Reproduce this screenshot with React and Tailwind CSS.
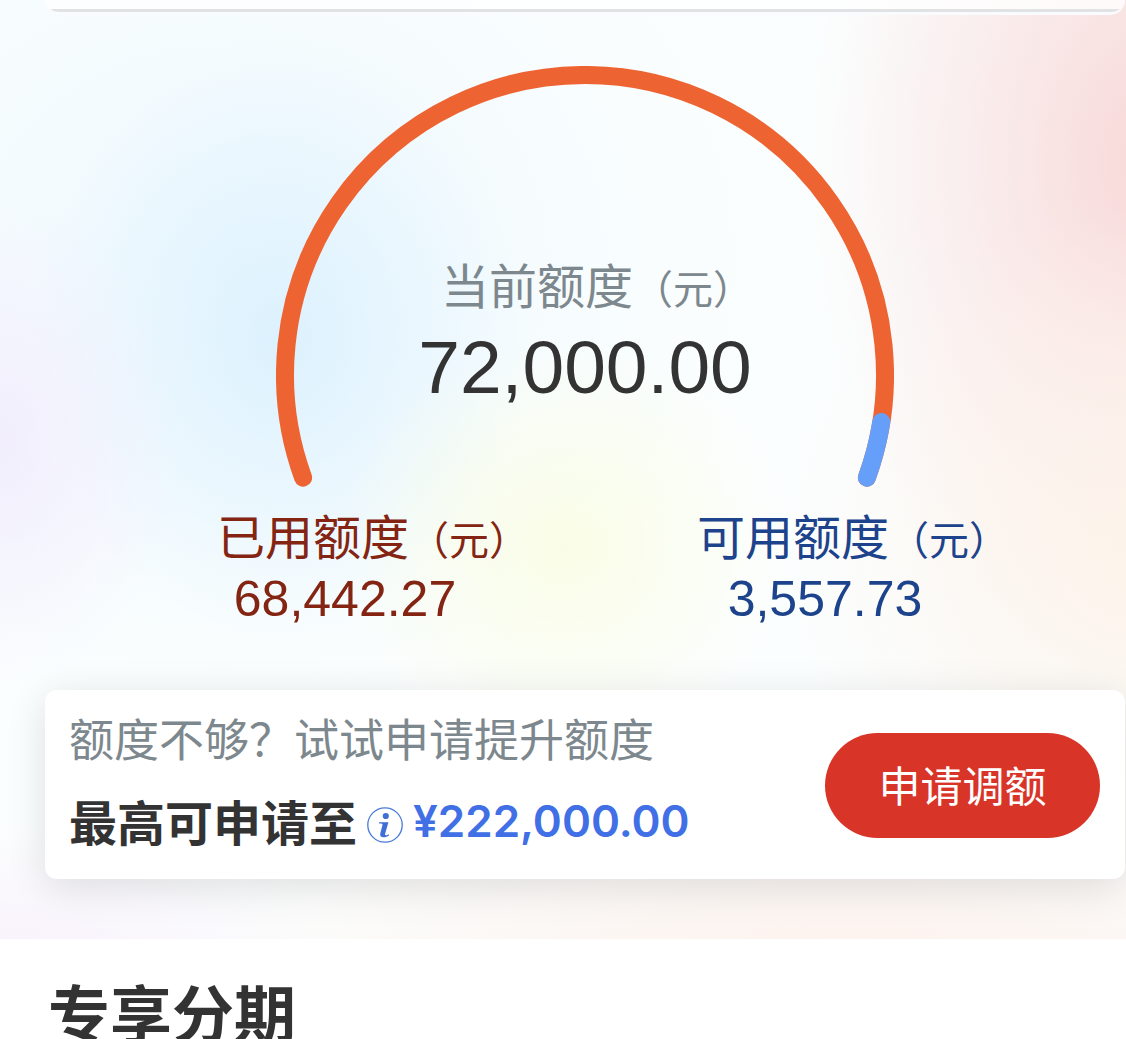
import React from 'react';

const limit = {
  total: '72,000.00',
  used: '68,442.27',
  available: '3,557.73',
  max: '¥222,000.00',
};

const AmountLabel = ({ children }) => (
  <span className="whitespace-nowrap text-[48px] leading-[60px]">
    {children}
    <span className="text-[40px]">（元）</span>
  </span>
);

const Glow = () => (
  <div className="absolute inset-0 -z-10 overflow-hidden bg-[#fbfefe]">
    <div className="absolute inset-0 bg-[radial-gradient(ellipse_48%_50%_at_20%_28%,#eff9fe_0%,#eff9fe00_100%)]" />
    <div className="absolute inset-0 bg-[radial-gradient(ellipse_22%_32%_at_25%_36%,#dcf1fe_0%,#dcf1fe99_35%,#dcf1fe00_100%)]" />
    <div className="absolute inset-0 bg-[radial-gradient(ellipse_16%_26%_at_0%_47%,#f2eefd_0%,#f2eefd00_100%)]" />
    <div className="absolute inset-0 bg-[radial-gradient(ellipse_30%_56%_at_102%_17%,#f8d8d8_0%,#f9dedebb_35%,#fbe8e800_100%)]" />
    <div className="absolute inset-0 bg-[radial-gradient(ellipse_32%_36%_at_102%_58%,#fdf3ea_0%,#fdf3ea00_100%)]" />
    <div className="absolute inset-0 bg-[radial-gradient(ellipse_20%_22%_at_50%_58%,#fafde6_0%,#fafde600_100%)]" />
    <div className="absolute inset-0 bg-[radial-gradient(ellipse_30%_14%_at_0%_102%,#f9f1fc_0%,#f9f1fc00_100%)]" />
    <div className="absolute inset-0 bg-[radial-gradient(ellipse_60%_18%_at_75%_102%,#fdf2ed_0%,#fdf2ed00_100%)]" />
  </div>
);

const Gauge = () => (
  <div className="grid justify-items-center">
    <svg
      className="col-start-1 row-start-1 w-[618px] max-w-full"
      viewBox="0 0 618 422"
      fill="none"
      strokeWidth="18"
      strokeLinecap="round"
      aria-hidden="true"
    >
      <path d="M27.1 411.6A300 300 0 1 1 590.9 411.6" stroke="#ee6332" />
      <path d="M605.3 356A300 300 0 0 1 590.9 411.6" stroke="#659ffa" />
    </svg>
    <div className="col-start-1 row-start-1 flex flex-col items-center pt-48">
      <p className="-mr-6 text-[#7d888e]">
        <AmountLabel>当前额度</AmountLabel>
      </p>
      <p className="text-[75px] leading-[94px] text-[#333]">{limit.total}</p>
    </div>
  </div>
);

const InfoIcon = () => (
  <svg className="size-9" viewBox="0 0 36 36" fill="none" aria-hidden="true">
    <circle cx="18" cy="18" r="17.2" stroke="#4a7bd8" strokeWidth="1.3" />
    <circle cx="18.8" cy="9" r="3.1" fill="#3f6fd6" />
    <path
      d="M12 15.200h9.400l-3.200 11.400c-.3 1.200 0 1.700.8 1.700.9 0 1.700-.4 2.900-1.100l.3 1c-2 1.500-4 2.200-5.900 2.100-2.500-.1-3.600-1.700-3-4.100l2.100-7.800c.3-1.200 0-1.700-1.200-1.800l-2.200-.1z"
      fill="#3f6fd6"
    />
  </svg>
);

const App = () => {
  return (
    <div className="min-h-screen bg-white font-['Liberation_Sans','Noto_Sans_CJK_SC',sans-serif]">
      <section className="relative isolate pb-[60px] pl-[45px] pr-px">
        <Glow />
        <div className="h-[15px] overflow-hidden rounded-b-[15px] border-b-[3px] border-[#fafbff] bg-white/80">
          <div className="h-3 border-b-[3px] border-[#e0e2e3]" />
        </div>

        <div className="pt-[51px]">
          <Gauge />
        </div>

        <div className="grid grid-cols-2 px-[60px] pt-[21px]">
          <div className="flex flex-col items-center text-[#842513]">
            <p className="pl-14">
              <AmountLabel>已用额度</AmountLabel>
            </p>
            <p className="text-[50px] leading-[56px]">{limit.used}</p>
          </div>
          <div className="flex flex-col items-center text-[#1c438b]">
            <p className="pl-14">
              <AmountLabel>可用额度</AmountLabel>
            </p>
            <p className="text-[50px] leading-[56px]">{limit.available}</p>
          </div>
        </div>

        <div className="mt-[63px] flex items-center justify-between rounded-xl bg-white pb-5 pl-6 pr-[25px] pt-[22px] shadow-[0_8px_40px_rgba(0,0,0,0.12)]">
          <div>
            <p className="text-[45px] leading-[60px] text-[#7d888e]">额度不够？试试申请提升额度</p>
            <div className="mt-[18px] flex items-start whitespace-nowrap">
              <span className="text-[48px] font-bold leading-[69px] text-[#333]">最高可申请至</span>
              <button className="mx-2.5 self-center" aria-label="额度说明">
                <InfoIcon />
              </button>
              <span className="font-[Inter] text-[44px] font-semibold leading-[62px] text-[#416fe5]">
                {limit.max}
              </span>
            </div>
          </div>
          <button className="h-[105px] w-[275px] shrink-0 rounded-full bg-[#d93428] pt-1 text-[42px] text-white">
            申请调额
          </button>
        </div>
      </section>

      <section className="px-12 pt-10">
        <h2 className="text-[62px] font-bold leading-[75px] text-[#333]">专享分期</h2>
      </section>
    </div>
  );
};

export default App;
